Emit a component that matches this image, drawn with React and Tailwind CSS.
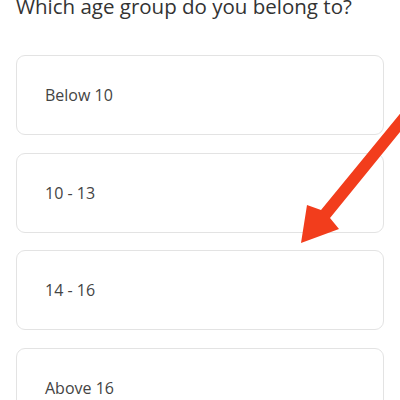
import React from "react";

const options = ["Below 10", "10 - 13", "14 - 16", "Above 16"];

export default function App() {
  return (
    <div
      className="relative w-[400px] h-[400px] overflow-hidden bg-white"
      style={{ fontFamily: '"Open Sans", "Noto Sans", sans-serif' }}
    >
      <div className="px-4">
        <h1 className="text-[20.5px] leading-[28px] -mt-[8.5px] text-[#333333] font-normal">
          Which age group do you belong to?
        </h1>
        <div className="mt-[35.5px] flex flex-col gap-[17.5px]">
          {options.map((o) => (
            <div
              key={o}
              className="h-[80px] flex items-center pl-[28px] border border-[#e3e3e3] rounded-[9px] bg-white"
            >
              <span className="text-[16px] text-[#444444]">{o}</span>
            </div>
          ))}
        </div>
      </div>
      <svg
        className="absolute inset-0 pointer-events-none"
        width="400"
        height="400"
        viewBox="0 0 400 400"
      >
        <polygon
          points="301,243 339,229 330,218 426,100 417,93 321,210 307,205"
          fill="#f23d1c"
        />
      </svg>
    </div>
  );
}
